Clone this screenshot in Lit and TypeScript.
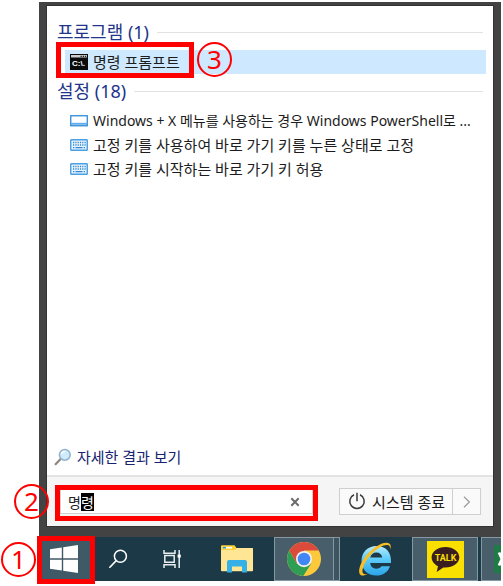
import { LitElement, html, css, svg } from "lit";
import { customElement, property, query } from "lit/decorators.js";
import { classMap } from "lit/directives/class-map.js";

const keyDots = [0, 1, 2, 3, 4, 5].map(
  (i) => svg`<path d="M${3 + i * 2.3} 3.5h1.2M${3 + i * 2.3} 6h1.2" />`
);

const icons = {
  cmd: html`<svg width="18" height="16" viewBox="0 0 18 16" aria-hidden="true">
    <rect x="0" y="0" width="18" height="16" fill="#0b0b0b" />
    <rect x="1" y="1" width="16" height="2.500" fill="#c9ccd0" />
    <path d="M10.500 2.300h1.300M12.700 2.300h1.300M14.900 2.300h1.300" stroke="#222" stroke-width="1.200" />
    <text x="2" y="12" font-family="Liberation Sans, sans-serif" font-size="8" font-weight="700" fill="#fff">C:&#92;.</text>
  </svg>`,
  bar: html`<svg width="18" height="12" viewBox="0 0 18 12" aria-hidden="true">
    <rect x=".75" y=".75" width="16.5" height="10" fill="#fff" stroke="#2f8ad8" stroke-width="1.3" />
    <path d="M1 8.8h16" stroke="#62adec" stroke-width="2" />
  </svg>`,
  keyboard: html`<svg width="18" height="12" viewBox="0 0 18 12" aria-hidden="true">
    <rect x=".75" y=".75" width="16.5" height="10.5" rx=".6" fill="#e9f4fd" stroke="#4a9ee2" stroke-width="1.4" />
    <g stroke="#2d86d3" stroke-width="1.3" fill="none">${keyDots}<path d="M3 8.7h1.4M5.5 8.7h7M13.6 8.7h1.4" /></g>
  </svg>`,
  lens: html`<svg width="18" height="18" viewBox="0 0 18 18" aria-hidden="true">
    <path d="M1.6 16.2 6.6 11" stroke="#8d8780" stroke-width="2.2" stroke-linecap="round" />
    <circle cx="10.8" cy="6.8" r="5.4" fill="#cfeafb" stroke="#8fb3cd" stroke-width="1.5" />
    <path d="M7.6 6.2a3.4 3.4 0 0 1 3.6-2.6" stroke="#fff" stroke-width="1.5" fill="none" />
  </svg>`,
  clear: html`<svg width="10" height="10" viewBox="0 0 10 10" aria-hidden="true">
    <path d="M1.3 1.3l7.4 7.4M8.7 1.3 1.3 8.7" stroke="#6b6b6b" stroke-width="2" />
  </svg>`,
  power: html`<svg width="18" height="19" viewBox="0 0 18 19" aria-hidden="true">
    <path d="M6 2.8a7.2 7.2 0 1 0 6 0M9 .8v8.4" stroke="#3a3a3a" stroke-width="1.5" fill="none" />
  </svg>`,
  chevron: html`<svg width="8" height="12" viewBox="0 0 8 12" aria-hidden="true">
    <path d="M1 .8 6.4 6 1 11.2" stroke="#9b9b9b" stroke-width="1.2" fill="none" />
  </svg>`,
  windows: html`<svg width="28" height="28" viewBox="0 0 28 28" fill="#fff" aria-hidden="true">
    <path d="M0 4.2 11.8 2.4V13.3H0zM13.2 2.2 28 0V13.3H13.2zM0 14.7h11.8v10.9L0 23.8zM13.2 14.7H28V28l-14.8-2.2z" />
  </svg>`,
  search: html`<svg width="20" height="20" viewBox="0 0 20 20" aria-hidden="true">
    <circle cx="12.4" cy="7.2" r="6" fill="none" stroke="#fff" stroke-width="1.5" />
    <path d="M8.2 11.6 1.4 18.8" stroke="#fff" stroke-width="1.6" />
  </svg>`,
  tasks: html`<svg width="18" height="18" viewBox="0 0 18 18" fill="none" stroke="#e8eef0" stroke-width="1.5" aria-hidden="true">
    <path d="M1 0v3.2h11V0M1 18v-3.2h11V18M1.8 5.6h9.4v6.6H1.8zM16.2 0v18" />
    <path d="M14.6 4.6h3.2v3h-3.2z" fill="#fff" stroke="none" />
  </svg>`,
  folder: html`<svg width="32" height="28" viewBox="0 0 32 28" aria-hidden="true">
    <path d="M0 1.5Q0 .5 1 .5h12.5L15.5 3H31q1 0 1 1v21.5H0z" fill="#f6cf57" />
    <path d="M0 5h14l2-2h15q1 0 1 1v21.5q0 .8-1 .8H1q-1 0-1-.8z" fill="#ffe694" />
    <path d="M0 1.5Q0 .5 1 .5h12.5L15 3l-2 1.8H0z" fill="#fcd32f" />
    <path d="M2 2.7h9" stroke="#fff" stroke-width="1.6" /><path d="M2 2.7h3" stroke="#2d9ad8" stroke-width="1.6" />
    <path d="M6 27.5V17q0-2 2-2h16q2 0 2 2v10.5h-5v-6H11v6z" fill="#35b1e8" />
  </svg>`,
  chrome: html`<svg width="34" height="34" viewBox="0 0 34 34" aria-hidden="true">
    <circle cx="17" cy="17" r="17" fill="#fcc93c" />
    <path d="M17 17V8.5h14.7A17 17 0 0 0 2.3 8.5L9.6 21.2z" fill="#dc4a3c" />
    <path d="M2.3 8.500 9.600 21.200 17 25.500 24.400 21.200 16.300 34A17 17 0 0 1 2.300 8.500z" fill="#2f9e55" />
    <circle cx="17" cy="17" r="8" fill="#f1f1f1" /><circle cx="17" cy="17" r="6.3" fill="#4285f4" />
  </svg>`,
  ie: html`<svg width="36" height="36" viewBox="0 0 36 36" aria-hidden="true">
    <defs><linearGradient id="ie" x1="0" y1="0" x2="0" y2="1">
      <stop offset="0" stop-color="#b5ecff" /><stop offset=".45" stop-color="#5dcbf8" /><stop offset="1" stop-color="#2ba4e8" />
    </linearGradient></defs>
    <path fill-rule="evenodd" fill="url(#ie)" d="M34 22H13.2c.4 3.7 2.8 5.7 6 5.7 2.500 0 4.300-.9 5.300-2.500H33C31 31 26 34.500 19.200 34.500 10.500 34.500 4.500 28.500 4.500 20S10.500 5 19.500 5C29 5 34.800 11.500 34 22zM13.300 16.400h11.900c-.3-3-2.500-5-5.800-5s-5.500 2-6.100 5z" />
    <path d="M33.200 8.500C34.500 4.500 33.500 2 30 1.700 24 1.200 14.500 7.500 8 16 2 24 .5 32.500 4 34.200c1.700.8 4.200 0 6.800-1.500C7.500 33.700 5.800 33 5.500 31 5 27 8.500 19.500 14.500 13 21 6.200 28.500 2.800 31.500 4.300c1.200.6 1.700 2 1.700 4.200z" fill="#f7bf25" />
  </svg>`,
  talk: html`<svg width="37" height="37" viewBox="0 0 37 37" aria-hidden="true">
    <rect width="37" height="37" fill="#f9e000" />
    <path d="M18.500 6C11 6 4.600 10.300 4.600 16.300c0 4 2.600 7 6.400 8.900l-1.300 5.800 6.600-4.500c8.900.8 16-4 16-10.200C32.300 10.300 26 6 18.500 6z" fill="#3a1d1f" />
    <text x="18.500" y="20" text-anchor="middle" font-family="Roboto, sans-serif" font-size="9" font-weight="700" fill="#f9e000">TALK</text>
  </svg>`,
  sheet: html`<svg width="28" height="28" viewBox="0 0 28 28" aria-hidden="true">
    <rect width="28" height="28" fill="#1e7b45" />
    <path d="M5 7.500 11 20.500M11 7.500 5 20.500" stroke="#fff" stroke-width="2.800" />
  </svg>`,
};

const settings = [
  { icon: icons.bar, long: true, label: "Windows + X 메뉴를 사용하는 경우 Windows PowerShell로 ..." },
  { icon: icons.keyboard, long: false, label: "고정 키를 사용하여 바로 가기 키를 누른 상태로 고정" },
  { icon: icons.keyboard, long: false, label: "고정 키를 시작하는 바로 가기 키 허용" },
];

@customElement("step-mark")
class StepMark extends LitElement {
  @property() step = "";
  static styles = css`
    :host {
      display: block;
      pointer-events: none;
    }
    .ring {
      box-sizing: border-box;
      width: 35px;
      height: 35px;
      border: 2px solid #f00;
      border-radius: 50%;
      color: #f00;
      font: 26px/31px "Noto Sans", sans-serif;
      text-align: center;
    }
  `;
  render() {
    return html`<div class="ring">${this.step}</div>`;
  }
}

@customElement("app-root")
class AppRoot extends LitElement {
  @query(".query") field!: HTMLInputElement;

  static styles = css`
    :host {
      display: flex;
      box-sizing: border-box;
      min-height: 100vh;
      padding: 2px 2px 5px 39px;
      background: #fff;
      color: #1c1c1c;
      font: 15px/24px "Noto Sans", "Noto Sans CJK KR", sans-serif;
    }
    * {
      box-sizing: border-box;
    }
    svg {
      display: block;
      flex: none;
    }
    button {
      display: flex;
      align-items: center;
      justify-content: center;
      padding: 0;
      border: 0;
      background: none;
      color: inherit;
      font: inherit;
    }
    a {
      color: inherit;
      text-decoration: none;
    }
    .desktop {
      flex: 1;
      min-width: 0;
      display: flex;
      flex-direction: column;
      background: #434343;
    }
    .menu {
      flex: 1;
      display: flex;
      flex-direction: column;
      margin: 4px 8px 11px;
      background: #fff;
      box-shadow: 0 0 0 1px #333;
    }
    .results {
      flex: 1;
      padding-top: 12px;
    }
    .heading {
      display: flex;
      align-items: center;
      gap: 8px;
      margin: 0 10px 4px;
      color: #22358a;
      font-size: 18px;
      font-weight: 400;
      line-height: 28px;
    }
    .heading::after {
      content: "";
      flex: 1;
      height: 1px;
      background: #e2e2e2;
    }
    .list {
      margin: 0 7px 3px 18px;
      padding: 0;
      list-style: none;
    }
    .item {
      position: relative;
      display: flex;
      align-items: center;
      gap: 5px;
      height: 24px;
      padding-left: 5px;
      white-space: nowrap;
    }
    .item.long {
      font-size: 14px;
    }
    .item.selected {
      background: #cde8ff;
    }
    .frame {
      position: absolute;
      border: 5px solid #f00;
      pointer-events: none;
    }
    .frame.result {
      left: -9px;
      top: -8px;
      width: 138px;
      height: 36px;
    }
    .frame.entry {
      inset: -5px -6px -8px;
    }
    .frame.launch {
      inset: -1px 0 -3px -2px;
    }
    .mark {
      position: absolute;
    }
    .mark.three {
      left: 132px;
      top: -8px;
    }
    .mark.two {
      left: -47px;
      top: -6px;
    }
    .mark.one {
      left: -38px;
      top: 5px;
    }
    .more {
      display: flex;
      align-items: center;
      gap: 5px;
      padding: 0 7px 6px;
      color: #16246f;
    }
    .footer {
      display: flex;
      align-items: center;
      justify-content: space-between;
      gap: 26px;
      padding: 11px 12px 11px 13px;
      border-top: 2px solid #e3e3e3;
      background: #f5f5f5;
    }
    .searchbox {
      position: relative;
      flex: 1;
      display: flex;
      height: 25px;
      border: 1px solid #d0d0d0;
      background: #fff;
    }
    .query {
      flex: 1;
      min-width: 0;
      padding: 0 7px;
      border: 0;
      outline: 0;
      background: none;
      color: #222;
      caret-color: transparent;
      font: 14px/18px "Noto Sans CJK KR", sans-serif;
    }
    .query::selection {
      background: #000;
      color: #fff;
    }
    .clear {
      width: 34px;
    }
    .power {
      display: flex;
      height: 27px;
      border: 1px solid #cfcfcf;
      background: #fafafa;
    }
    .shutdown {
      gap: 6px;
      padding: 0 7px 0 8px;
    }
    .options {
      width: 28px;
      border-left: 1px solid #cfcfcf;
    }
    .taskbar {
      position: relative;
      display: flex;
      height: 44px;
      background: #1b3946;
    }
    .task {
      flex: none;
      width: 62px;
    }
    .task.start {
      position: relative;
      width: 56px;
      padding-right: 6px;
      background: #3f5966;
    }
    .task.find {
      width: 46px;
    }
    .task.files {
      width: 68px;
      margin-right: 3px;
    }
    .task.open {
      border: 1px solid #8499a2;
      background: #485f6b;
    }
    .task.browser {
      width: 60px;
    }
    .stack {
      flex: none;
      width: 6px;
      border: 1px solid #8499a2;
      border-left: 0;
      background: #3c5561;
    }
    .task.web {
      width: 72px;
      padding-right: 2px;
    }
    .task.chat {
      width: 66px;
      margin-right: 3px;
    }
    .task.sheet {
      flex: 1;
      min-width: 0;
      justify-content: flex-start;
      overflow: hidden;
      padding-left: 12px;
      border-right: 0;
    }
  `;

  firstUpdated() {
    this.field.focus();
    this.field.setSelectionRange(1, 2);
  }

  render() {
    return html`
      <div class="desktop">
        <main class="menu">
          <div class="results">
            <h2 class="heading">프로그램 (1)</h2>
            <ul class="list">
              <li class="item selected">
                ${icons.cmd}<a href="#cmd">명령 프롬프트</a>
                <span class="frame result"></span>
                <step-mark class="mark three" step="3"></step-mark>
              </li>
            </ul>
            <h2 class="heading">설정 (18)</h2>
            <ul class="list">
              ${settings.map(
                (s) => html`<li class=${classMap({ item: true, long: s.long })}>
                  ${s.icon}<a href="#setting">${s.label}</a>
                </li>`
              )}
            </ul>
          </div>
          <a class="more" href="#more">${icons.lens}<span>자세한 결과 보기</span></a>
          <div class="footer">
            <div class="searchbox">
              <input class="query" type="text" aria-label="검색" .value=${"명령"} />
              <button class="clear" aria-label="지우기">${icons.clear}</button>
              <span class="frame entry"></span>
              <step-mark class="mark two" step="2"></step-mark>
            </div>
            <div class="power">
              <button class="shutdown">${icons.power}<span>시스템 종료</span></button>
              <button class="options" aria-label="전원 옵션">${icons.chevron}</button>
            </div>
          </div>
        </main>
        <nav class="taskbar">
          <button class="task start" aria-label="시작">
            ${icons.windows}
            <span class="frame launch"></span>
            <step-mark class="mark one" step="1"></step-mark>
          </button>
          <button class="task find" aria-label="검색">${icons.search}</button>
          <button class="task" aria-label="작업 보기">${icons.tasks}</button>
          <button class="task files" aria-label="파일 탐색기">${icons.folder}</button>
          <button class="task browser open" aria-label="Chrome">${icons.chrome}</button>
          <span class="stack"></span>
          <button class="task web" aria-label="Internet Explorer">${icons.ie}</button>
          <button class="task chat open" aria-label="KakaoTalk">${icons.talk}</button>
          <button class="task sheet open" aria-label="Excel">${icons.sheet}</button>
        </nav>
      </div>
    `;
  }
}
